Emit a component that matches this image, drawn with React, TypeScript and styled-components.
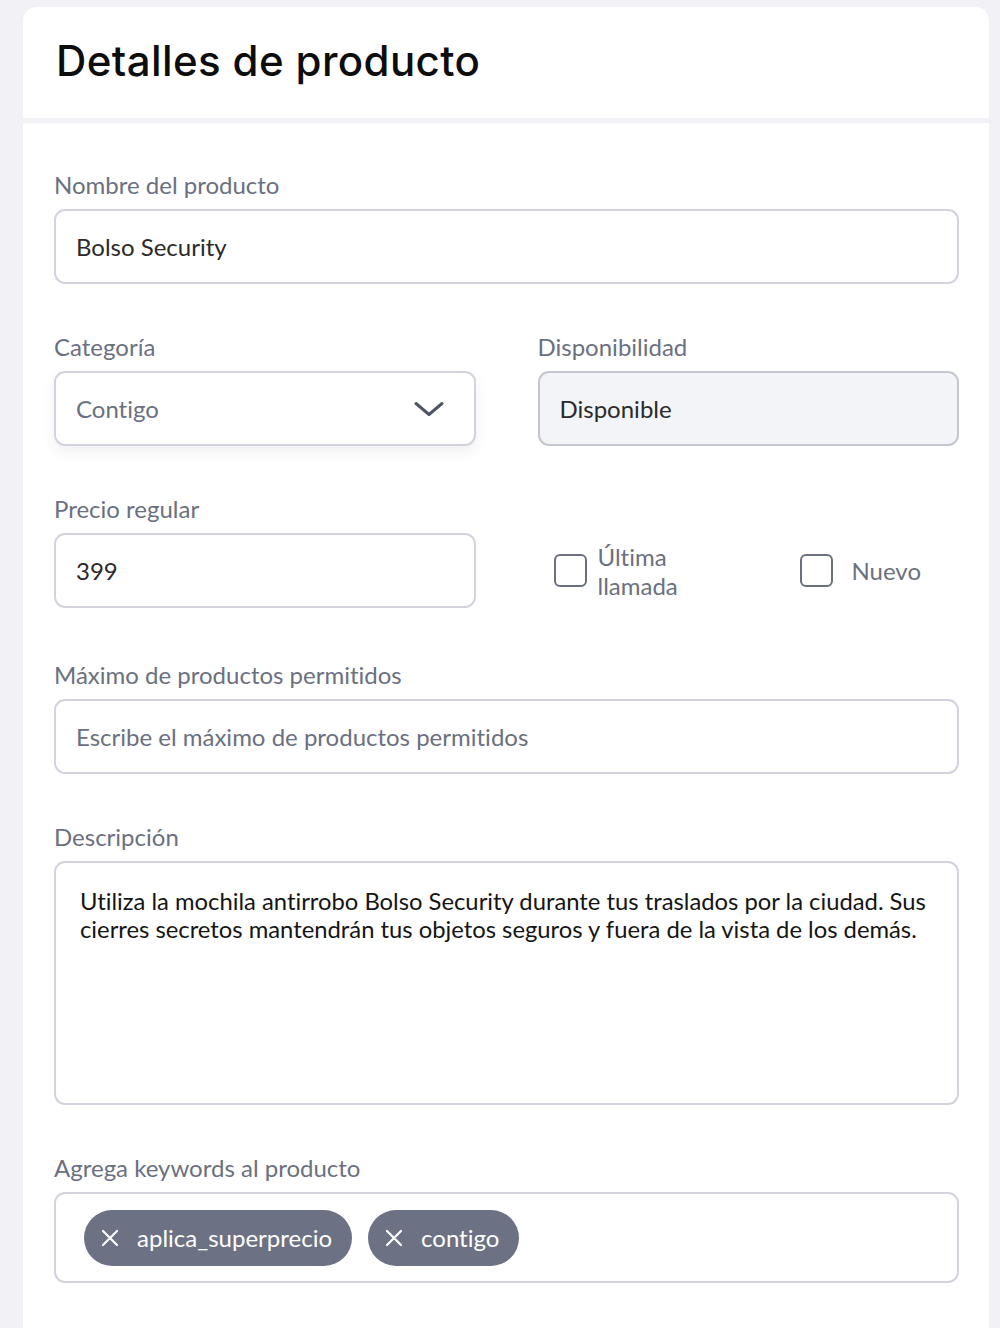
import React from "react";
import styled, { createGlobalStyle } from "styled-components";

const Global = createGlobalStyle`
  html, body { margin: 0; padding: 0; background: #f1f1f6; }
  body {
    font-family: "Lato", "Liberation Sans", sans-serif;
    font-variant-ligatures: no-common-ligatures;
    font-feature-settings: "liga" 0;
  }
  * { box-sizing: border-box; }
`;

const Page = styled.div`
  padding: 7px 11px 0 23px;
  min-height: 1328px;
`;

const Card = styled.div`
  background: #ffffff;
  border-radius: 14px 14px 0 0;
  min-height: 1321px;
`;

const Header = styled.div`
  height: 116px;
  display: flex;
  align-items: center;
  padding: 0 33px 4px;
  border-bottom: 5px solid #f1f1f6;
`;

const Title = styled.h1`
  margin: 0;
  font-family: "Inter", "Noto Sans", sans-serif;
  font-weight: 500;
  font-size: 42px;
  color: #0d0d0d;
  letter-spacing: 0.4px;
`;

const Body = styled.div`
  padding: 48px 30px 40px 31px;
  display: flex;
  flex-direction: column;
  gap: 49px;
`;

const Row = styled.div<{ $extra?: number }>`
  display: grid;
  grid-template-columns: 1fr 1fr;
  column-gap: 62px;
  margin-bottom: ${(p) => p.$extra ?? 0}px;
`;

const Field = styled.div`
  display: flex;
  flex-direction: column;
  gap: 11px;
`;

const Label = styled.label`
  font-size: 24px;
  line-height: 27px;
  color: #6b7080;
`;

const Input = styled.div<{ $muted?: boolean; $filled?: boolean }>`
  height: 75px;
  border: 2px solid #d3d3de;
  border-radius: 11px;
  background: ${(p) => (p.$filled ? "#f3f4f7" : "#ffffff")};
  border-color: ${(p) => (p.$filled ? "#c4c6d0" : "#d3d3de")};
  display: flex;
  align-items: center;
  padding: 0 20px;
  font-size: 24px;
  color: ${(p) => (p.$muted ? "#6b7080" : "#2a2a2a")};
`;

const Select = styled(Input)`
  justify-content: space-between;
  box-shadow: 0 6px 14px rgba(30, 40, 70, 0.07);
  padding-right: 30px;
`;

const TextArea = styled.div`
  height: 244px;
  border: 2px solid #d3d3de;
  border-radius: 11px;
  padding: 24px 16px 24px 24px;
  font-size: 23.8px;
  line-height: 28px;
  color: #151515;
`;

const ChecksWrap = styled.div`
  margin-top: 38px;
  height: 75px;
  display: flex;
  align-items: center;
  justify-content: space-between;
  padding: 0 38px 0 16px;
`;

const CheckItem = styled.div`
  display: flex;
  align-items: center;
  gap: 11px;
`;

const Box = styled.span`
  width: 33px;
  height: 33px;
  border: 2px solid #6b7080;
  border-radius: 6px;
  flex-shrink: 0;
`;

const CheckText = styled.span<{ $width?: number }>`
  font-size: 24px;
  line-height: 29px;
  color: #6b7080;
  width: ${(p) => (p.$width ? `${p.$width}px` : "auto")};
  padding-left: ${(p) => (p.$width ? 0 : 7)}px;
`;

const TagBox = styled.div`
  height: 91px;
  border: 2px solid #d3d3de;
  border-radius: 11px;
  display: flex;
  align-items: center;
  gap: 16px;
  padding: 0 28px;
`;

const Chip = styled.span`
  height: 56px;
  border-radius: 28px;
  background: #6c7283;
  color: #ffffff;
  display: inline-flex;
  align-items: center;
  gap: 18px;
  padding: 0 20px 0 17px;
  font-size: 24px;
`;

const Chevron = () => (
  <svg width="30" height="16" viewBox="0 0 30 16" fill="none">
    <path d="M2 2.5 L15 13.5 L28 2.5" stroke="#505565" strokeWidth="3" strokeLinecap="round" strokeLinejoin="round" />
  </svg>
);

const XIcon = () => (
  <svg width="18" height="18" viewBox="0 0 18 18" fill="none">
    <path d="M2 2 L16 16 M16 2 L2 16" stroke="#ffffff" strokeWidth="2.2" strokeLinecap="round" />
  </svg>
);

export default function App() {
  return (
    <Page>
      <Global />
      <Card>
        <Header>
          <Title>Detalles de producto</Title>
        </Header>
        <Body>
          <Field>
            <Label>Nombre del producto</Label>
            <Input>Bolso Security</Input>
          </Field>
          <Row>
            <Field>
              <Label>Categoría</Label>
              <Select $muted>
                Contigo
                <Chevron />
              </Select>
            </Field>
            <Field>
              <Label>Disponibilidad</Label>
              <Input $filled>Disponible</Input>
            </Field>
          </Row>
          <Row $extra={4}>
            <Field>
              <Label>Precio regular</Label>
              <Input>399</Input>
            </Field>
            <ChecksWrap>
              <CheckItem>
                <Box />
                <CheckText $width={96}>Última llamada</CheckText>
              </CheckItem>
              <CheckItem>
                <Box />
                <CheckText>Nuevo</CheckText>
              </CheckItem>
            </ChecksWrap>
          </Row>
          <Field>
            <Label>Máximo de productos permitidos</Label>
            <Input $muted>Escribe el máximo de productos permitidos</Input>
          </Field>
          <Field>
            <Label>Descripción</Label>
            <TextArea>
              Utiliza la mochila antirrobo Bolso Security durante tus traslados por la ciudad. Sus cierres secretos
              mantendrán tus objetos seguros y fuera de la vista de los demás.
            </TextArea>
          </Field>
          <Field>
            <Label>Agrega keywords al producto</Label>
            <TagBox>
              <Chip>
                <XIcon />
                aplica_superprecio
              </Chip>
              <Chip>
                <XIcon />
                contigo
              </Chip>
            </TagBox>
          </Field>
        </Body>
      </Card>
    </Page>
  );
}
